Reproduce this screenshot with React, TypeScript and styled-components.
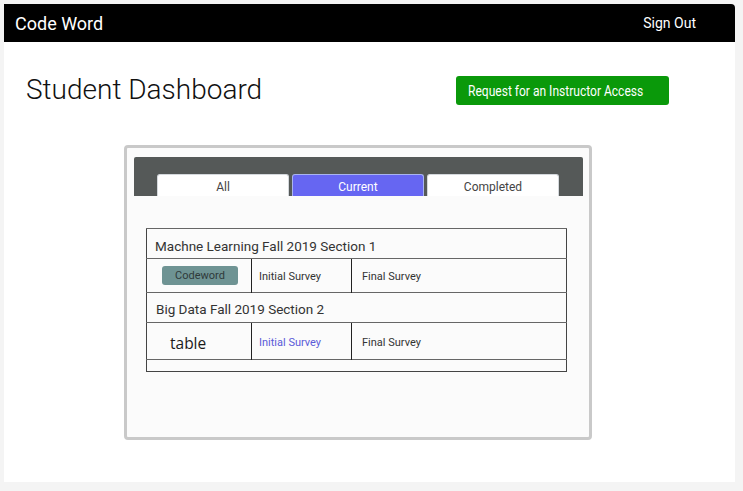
import React from "react";
import styled, { createGlobalStyle } from "styled-components";

const GlobalStyle = createGlobalStyle`
  html, body {
    margin: 0;
    padding: 0;
    background: #f4f4f4;
    font-family: Roboto, "Liberation Sans", sans-serif;
  }
`;

interface Course {
  title: string;
  first: "codeword" | "text";
  initialActive: boolean;
}

const courses: Course[] = [
  { title: "Machne Learning Fall 2019 Section 1", first: "codeword", initialActive: false },
  { title: "Big Data Fall 2019 Section 2", first: "text", initialActive: true },
];

const tabs = ["All", "Current", "Completed"];

const App = () => {
  return (
    <>
      <GlobalStyle />
      <Page>
        <NavBar>
          <Brand>Code Word</Brand>
          <NavLink>Sign Out</NavLink>
        </NavBar>
        <TopRow>
          <Title>Student Dashboard</Title>
          <AccessButton>
            <Narrow>Request for an Instructor Access</Narrow>
          </AccessButton>
        </TopRow>
        <Card>
          <TabBar>
            {tabs.map((t) => (
              <Tab key={t} active={t === "Current"}>
                {t}
              </Tab>
            ))}
          </TabBar>
          <CourseTable>
            <colgroup>
              <col style={{ width: 105 }} />
              <col style={{ width: 100 }} />
              <col />
            </colgroup>
            <tbody>
              {courses.map((c) => (
                <React.Fragment key={c.title}>
                  <tr>
                    <CourseTitle colSpan={3} tall={c.first === "text"}>
                      {c.title}
                    </CourseTitle>
                  </tr>
                  <tr>
                    <FirstCell tall={c.first === "text"}>
                      {c.first === "codeword" ? (
                        <CodewordButton>Codeword</CodewordButton>
                      ) : (
                        <BigText>table</BigText>
                      )}
                    </FirstCell>
                    <SurveyCell active={c.initialActive}>Initial Survey</SurveyCell>
                    <SurveyCell wide>Final Survey</SurveyCell>
                  </tr>
                </React.Fragment>
              ))}
              <tr>
                <EmptyCell colSpan={3} />
              </tr>
            </tbody>
          </CourseTable>
        </Card>
      </Page>
    </>
  );
};

export default App;

const Page = styled.div`
  margin: 4px 8px 9px 4px;
  height: 478px;
  background: #ffffff;
  border-radius: 0 4px 0 0;
  overflow: hidden;
`;

const NavBar = styled.header`
  height: 38px;
  background: #000000;
  display: flex;
  align-items: center;
  justify-content: space-between;
  padding: 0 39px 0 11px;
`;

const Brand = styled.div`
  color: #ffffff;
  font-size: 18px;
`;

const NavLink = styled.div`
  color: #ffffff;
  font-size: 14px;
`;

const TopRow = styled.div`
  display: flex;
  align-items: center;
  justify-content: space-between;
  height: 29px;
  margin-top: 34px;
  padding: 0 66px 0 22px;
`;

const Title = styled.h1`
  margin: 0;
  font-size: 28px;
  font-weight: 300;
  color: #111;
  position: relative;
  top: -1px;
`;

const AccessButton = styled.button`
  width: 213px;
  height: 29px;
  border: none;
  border-radius: 3px;
  background: #0a990a;
  color: #ffffff;
  font-family: Roboto, sans-serif;
  font-size: 14px;
  text-align: left;
  padding: 0 0 0 12px;
  white-space: nowrap;
  display: flex;
  align-items: center;
`;

const Narrow = styled.span`
  display: inline-block;
  transform: scaleX(0.86);
  transform-origin: left center;
`;

const Card = styled.div`
  box-sizing: border-box;
  width: 468px;
  height: 295px;
  margin: 40px 0 0 120px;
  border: 3px solid #c9c9c9;
  border-radius: 4px;
  background: #fbfbfb;
  padding: 9px 6px 0 7px;
`;

const TabBar = styled.div`
  height: 39px;
  background: #555958;
  border-radius: 2px 2px 0 0;
  display: flex;
  align-items: flex-end;
  gap: 3px;
  padding-left: 23px;
`;

const Tab = styled.div<{ active?: boolean }>`
  box-sizing: border-box;
  width: 132px;
  height: 22px;
  border: 1px solid ${(p) => (p.active ? "#a9b4f0" : "#d4d8dc")};
  border-bottom: none;
  border-radius: 3px 3px 0 0;
  background: ${(p) => (p.active ? "#6666f2" : "#ffffff")};
  color: ${(p) => (p.active ? "#ffffff" : "#444444")};
  font-size: 12px;
  text-align: center;
  padding-top: 5px;
`;

const CourseTable = styled.table`
  width: 421px;
  margin: 32px 0 0 12px;
  border-collapse: collapse;
  table-layout: fixed;
  color: #333;
  border-left: 1px solid #444;
  border-right: 1px solid #444;
`;

const CourseTitle = styled.td<{ tall?: boolean }>`
  height: 30px;
  padding: ${(p) => (p.tall ? "3px 0 0 9px" : "5px 0 0 8px")};
  border-top: 1px solid #666;
  border-bottom: 1px solid #666;
  font-size: 13.5px;
  color: #333;
  box-sizing: border-box;
`;

const FirstCell = styled.td<{ tall?: boolean }>`
  height: ${(p) => (p.tall ? "37px" : "34px")};
  box-sizing: border-box;
  border-right: 1px solid #222;
  padding: 0;
  text-align: center;
  vertical-align: middle;
`;

const SurveyCell = styled.td<{ active?: boolean; wide?: boolean }>`
  box-sizing: border-box;
  border-right: ${(p) => (p.wide ? "none" : "1px solid #222")};
  padding: 2px 0 0 ${(p) => (p.wide ? "10px" : "7px")};
  font-size: 11px;
  color: ${(p) => (p.active ? "#5a5ad8" : "#333333")};
  vertical-align: middle;
`;

const CodewordButton = styled.button`
  width: 76px;
  height: 19px;
  border: none;
  border-radius: 3px;
  background: #6e9393;
  color: #2f3a3a;
  font-family: Roboto, sans-serif;
  font-size: 11px;
  padding: 0;
  margin-left: 2px;
  margin-top: -2px;
  vertical-align: middle;
`;

const BigText = styled.span`
  display: block;
  text-align: left;
  padding: 4px 0 0 23px;
  font-family: "Open Sans", Roboto, sans-serif;
  font-size: 15.5px;
  color: #1a1a1a;
`;

const EmptyCell = styled.td`
  height: 12px;
  padding: 0;
  border-top: 1px solid #666;
  border-bottom: 1px solid #444;
  box-sizing: border-box;
`;
